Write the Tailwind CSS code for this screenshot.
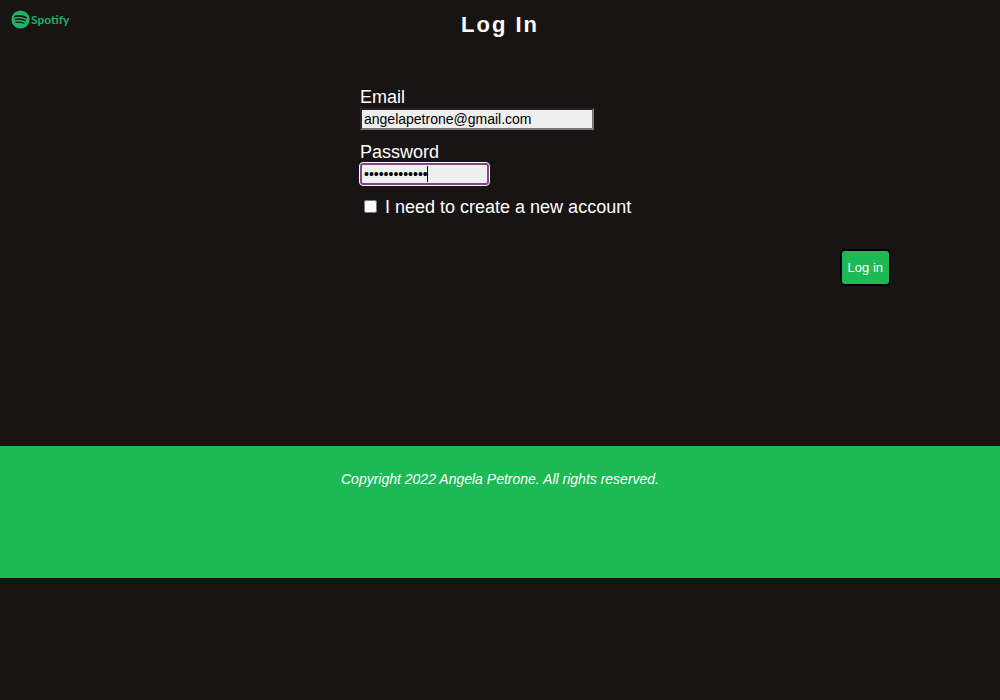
<!DOCTYPE html>
<html lang="en">
<head>
<meta charset="utf-8">
<meta name="viewport" content="width=device-width, initial-scale=1">
<title>Log In</title>
<script src="https://cdn.jsdelivr.net/npm/@tailwindcss/browser@4"></script>
</head>
<body class="flex min-h-screen flex-col bg-[#191414] font-['Liberation_Sans',Arial,sans-serif] text-white">
  <header class="grid grid-cols-[1fr_auto_1fr] items-start px-[11px] pt-[10px]">
    <a href="#" aria-label="Spotify" class="flex items-center gap-px text-[#1db368]">
      <svg class="size-[19px]" viewBox="0 0 24 24" aria-hidden="true">
        <circle cx="12" cy="12" r="11.500" fill="currentColor"/>
        <g fill="none" stroke="#191414" stroke-linecap="round">
          <path d="M4.800 8.200c4.800-1.400 10.300-.9 14.400 1.500" stroke-width="2.200"/>
          <path d="M5.500 12.100c4.200-1.200 8.800-.7 12.300 1.400" stroke-width="1.900"/>
          <path d="M6.200 15.700c3.600-.9 7.200-.5 10.200 1.300" stroke-width="1.500"/>
        </g>
      </svg>
      <span class="font-['Lato','Liberation_Sans',sans-serif] text-[12px] leading-[19px] font-bold">Spotify</span>
    </a>
    <h1 class="text-[22px] leading-[30px] font-bold tracking-[2px]">Log In</h1>
  </header>

  <main class="h-[406px] pt-[47px]">
    <form class="ml-[36%] mr-[109px] flex flex-col items-start text-[18px] leading-[21px]">
      <label for="email">Email</label>
      <input id="email" type="email" value="angelapetrone@gmail.com" class="mb-3 h-[22px] w-[234px] border-2 border-t-[#252525] border-r-[#767676] border-b-[#767676] border-l-[#252525] bg-[#efefef] px-[2px] text-[14px] leading-[16px] text-black outline-none">
      <label for="password">Password</label>
      <div class="relative mb-3">
        <input id="password" type="password" value="abcdefghijklm" class="block h-[22px] w-[129px] rounded-[3px] border-2 border-[#854286] bg-[#efefef] px-[2px] text-[14px] leading-[16px] text-black outline-1 outline-white">
        <span class="absolute top-[3px] left-[67px] h-4 w-px bg-black" aria-hidden="true"></span>
      </div>
      <label for="create" class="flex items-start gap-2 pl-1">
        <input id="create" type="checkbox" class="mt-[3px] size-[13px]">
        I need to create a new account
      </label>
      <button type="submit" class="mt-[31px] self-end rounded-[5px] border-2 border-black bg-[#1db954] px-[6px] py-[9px] text-[13px] leading-[15px]">Log in</button>
    </form>
  </main>

  <footer class="h-[132px] bg-[#1db954] pt-[25px] text-center text-[14px] leading-[16px] italic">
    <p>Copyright 2022 Angela Petrone. All rights reserved.</p>
  </footer>
</body>
</html>
